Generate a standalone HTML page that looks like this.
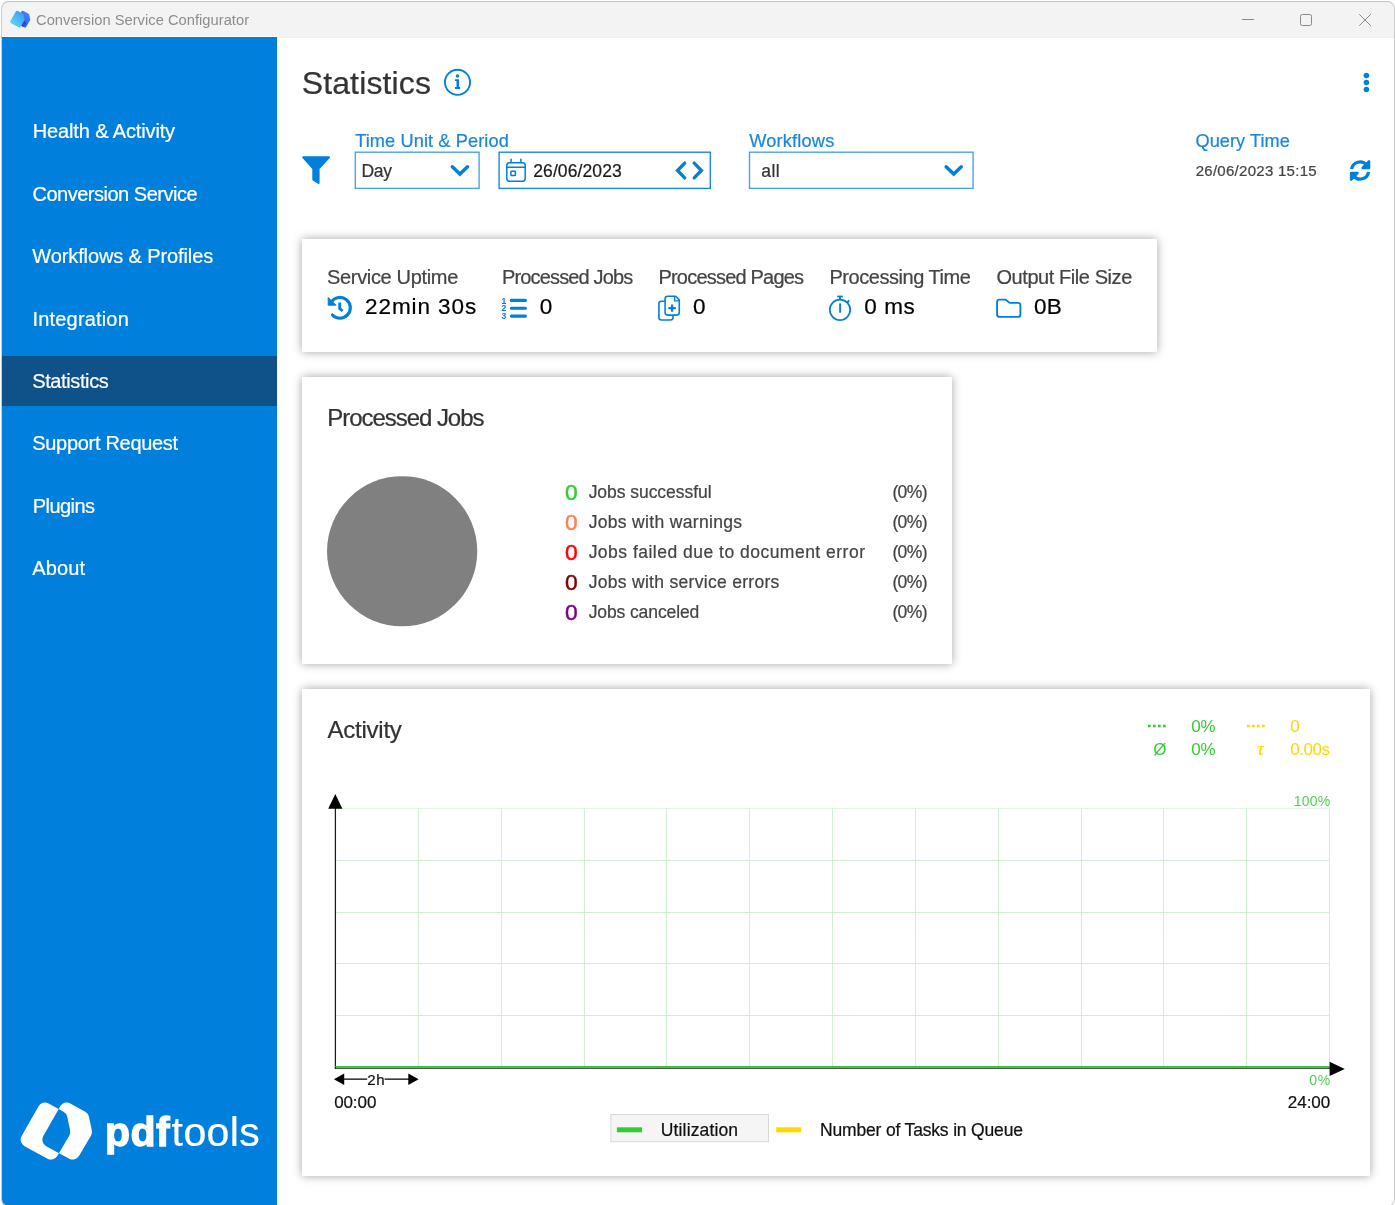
<!DOCTYPE html>
<html lang="en">
<head>
<meta charset="utf-8">
<title>Conversion Service Configurator</title>
<style>
*{box-sizing:border-box}
html,body{margin:0;padding:0;background:#fff}
body{width:1395px;height:1205px;overflow:hidden;position:relative;font-family:"Liberation Sans",sans-serif;color:#333}
/* every text run is absolutely placed: left = ink start, top derived from baseline */
.t{position:absolute;white-space:pre;line-height:1;margin:0;font-weight:400;display:block;text-decoration:none;-webkit-text-stroke:.22px currentColor}
b.t{-webkit-text-stroke:1.3px #fff}
.t.thin{-webkit-text-stroke:0}
i.t{font-style:normal;-webkit-text-stroke:.5px currentColor}
.grp{position:absolute;left:0;top:0;width:0;height:0}
#window{position:absolute;left:1px;top:1px;width:1394px;height:1206px;overflow:hidden;background:#fff;border-radius:8px}
#frame{position:absolute;left:1px;top:1px;width:1394px;height:1206px;border:1px solid #cdcdcd;border-top-color:#c3c3c3;border-radius:8px;pointer-events:none}
#page{position:absolute;left:-1px;top:-1px;width:1395px;height:1205px;will-change:transform}
#titlebar{position:absolute;left:0;top:0;width:1395px;height:38px;background:#f3f3f3;border-bottom:1px solid #f0f0f0}
#sidebar{position:absolute;left:2px;top:36px;width:275px;height:1171px;background:#0080dc;border-top:1px solid #fffdf8}
#sidebar .sel{position:absolute;left:0;top:319px;width:275px;height:50px;background:#0f5289}
.card{position:absolute;background:#fff;box-shadow:0 0 9px rgba(0,0,0,.36)}
svg{position:absolute;left:0;top:0;overflow:visible}
</style>
</head>
<body>
<div id="window"><div id="page">

<header id="titlebar">
<svg width="1395" height="40" viewBox="0 0 1395 40" aria-hidden="true"><defs><linearGradient id="ga" x1="0" y1="1" x2="1" y2="0"><stop offset="0" stop-color="#6adcf7"/><stop offset="1" stop-color="#2e97f2"/></linearGradient><linearGradient id="gb" x1="0" y1="1" x2="1" y2="0"><stop offset="0" stop-color="#1a55f0"/><stop offset="1" stop-color="#4c8af8"/></linearGradient></defs><path fill="url(#gb)" d="M21.39 11.58A1.61 1.61 0 0 1 23.56 10.96L28.51 13.69A1.61 1.61 0 0 1 29.31 14.76L30.23 19.15A1.61 1.61 0 0 1 30.05 20.30L26.29 26.70A1.61 1.61 0 0 1 24.14 27.30L16.64 23.25A1.61 1.61 0 0 1 16.01 21.05Z"/><path fill="#3d3fe0" d="M20.6 23.3 L23.4 18.6 L26.2 23.4 L24.2 26.4 Q23.4 27.2 22.4 26.6 L20.6 25.4Z"/><path fill="url(#ga)" d="M15.79 11.58A1.61 1.61 0 0 1 17.96 10.96L22.91 13.69A1.61 1.61 0 0 1 23.71 14.76L24.63 19.15A1.61 1.61 0 0 1 24.45 20.30L20.69 26.70A1.61 1.61 0 0 1 18.54 27.30L11.04 23.25A1.61 1.61 0 0 1 10.41 21.05Z"/><g fill="none" stroke="#8a8a8a" stroke-width="1"><path d="M1242 19.5H1254"/><rect x="1300.5" y="14.5" width="11" height="11" rx="1.8"/><path d="M1359.2 14.2L1370.8 25.8M1370.8 14.2L1359.2 25.8"/></g></svg>
<span class="t thin" style="left:36.05px;top:13.10px;font-size:14.7px;color:#8d8d8d;letter-spacing:0.024px">Conversion Service Configurator</span>
</header>

<nav class="grp" id="nav">
<div id="sidebar"><div class="sel"></div></div>
<a class="t" style="left:32.76px;top:121.30px;font-size:20px;color:#fff;letter-spacing:-0.133px">Health &amp; Activity</a>
<a class="t" style="left:32.48px;top:183.70px;font-size:20px;color:#fff;letter-spacing:-0.489px">Conversion Service</a>
<a class="t" style="left:32.31px;top:246.10px;font-size:20px;color:#fff;letter-spacing:-0.111px">Workflows &amp; Profiles</a>
<a class="t" style="left:32.55px;top:308.50px;font-size:20px;color:#fff;letter-spacing:0.173px">Integration</a>
<a class="t" style="left:32.19px;top:370.90px;font-size:20px;color:#fff;letter-spacing:-0.378px">Statistics</a>
<a class="t" style="left:32.19px;top:433.30px;font-size:20px;color:#fff;letter-spacing:-0.297px">Support Request</a>
<a class="t" style="left:32.76px;top:495.70px;font-size:20px;color:#fff;letter-spacing:-0.558px">Plugins</a>
<a class="t" style="left:32.36px;top:558.40px;font-size:20px;color:#fff;letter-spacing:0.080px">About</a>
<div class="grp" id="brand">
<svg class="logo-mark" width="1395" height="1205" viewBox="0 0 1395 1205" aria-hidden="true"><path fill="#fff" fill-rule="evenodd" d="M38.57 1106.23A7.40 7.40 0 0 1 48.57 1103.40L63.54 1111.63A7.40 7.40 0 0 1 67.21 1116.59L70.13 1130.40A7.40 7.40 0 0 1 69.27 1135.67L57.40 1155.87A7.40 7.40 0 0 1 47.51 1158.64L24.54 1146.24A7.40 7.40 0 0 1 21.62 1136.08ZM60.27 1106.23A7.40 7.40 0 0 1 70.27 1103.40L85.24 1111.63A7.40 7.40 0 0 1 88.91 1116.59L91.83 1130.40A7.40 7.40 0 0 1 90.97 1135.67L79.10 1155.87A7.40 7.40 0 0 1 69.21 1158.64L46.24 1146.24A7.40 7.40 0 0 1 43.32 1136.08Z"/></svg>
<b class="t" style="left:105.00px;top:1112.10px;font-size:41px;color:#fff;letter-spacing:0.486px;font-weight:700">pdf</b>
<span class="t" style="left:171.58px;top:1112.10px;font-size:41px;color:#fff;letter-spacing:0.423px">tools</span>
</div>
</nav>

<main class="grp" id="main">
<header class="grp" id="page-head">
<svg width="1395" height="120" viewBox="0 0 1395 120" aria-hidden="true"><circle cx="457.5" cy="82.3" r="12.55" fill="none" stroke="#0080dc" stroke-width="1.9"/><circle cx="457.5" cy="76.1" r="1.75" fill="#0080dc"/><path fill="#0080dc" d="M455 79.2h4.0v7.9h1.2v1.8h-5.3v-1.8h1.6v-6.1h-1.5z"/><g fill="#0080dc"><circle cx="1366.4" cy="75.5" r="2.8"/><circle cx="1366.4" cy="82.5" r="2.8"/><circle cx="1366.4" cy="89.45" r="2.8"/></g></svg>
<h1 class="t" style="left:301.65px;top:67.20px;font-size:32px;color:#333;letter-spacing:0.142px">Statistics</h1>
</header>

<section class="grp" id="filters">
<svg width="1395" height="220" viewBox="0 0 1395 220" aria-hidden="true"><path fill="#0080dc" stroke="#0080dc" stroke-width="2" stroke-linejoin="round" d="M303.2 157.3H329L318.6 168.6V182.9L313.3 179.6V168.6Z"/><rect x="355.3" y="152.2" width="123.8" height="36.2" fill="#fff" stroke="#4aa3ee" stroke-width="1.4"/><rect x="499.1" y="152.2" width="211.2" height="36.2" fill="#fff" stroke="#1c89de" stroke-width="1.4"/><rect x="749.5" y="152.2" width="223.6" height="36.2" fill="#fff" stroke="#4aa3ee" stroke-width="1.4"/><path d="M452.30 166.80L459.90 174.10L467.50 166.80" fill="none" stroke="#0080dc" stroke-width="3.4" stroke-linecap="round" stroke-linejoin="miter"/><path d="M946.10 166.80L953.70 174.10L961.30 166.80" fill="none" stroke="#0080dc" stroke-width="3.4" stroke-linecap="round" stroke-linejoin="miter"/><g fill="none" stroke="#0080dc" stroke-width="1.5"><rect x="506.8" y="162.8" width="18.4" height="18.4" rx="2.6"/><path d="M506.8 167.3H525.2M511.1 158.8V162.8M520.9 158.8V162.8"/><rect x="510.9" y="171.3" width="4.5" height="4.3" rx="0.6"/></g><path d="M684.7 163.1L677.5 170.5L684.7 177.9M694.2 163.1L701.4 170.5L694.2 177.9" fill="none" stroke="#0080dc" stroke-width="3.3" stroke-linecap="round" stroke-linejoin="miter"/><g id="rf"><path d="M1351.6 169.1A8.6 8.6 0 0 1 1366.6 164.9" fill="none" stroke="#0080dc" stroke-width="3.3"/><path d="M1369 161.5V167.9H1362.7Z" fill="#0080dc" stroke="#0080dc" stroke-width="2.6" stroke-linejoin="round"/></g><g transform="rotate(180 1360.1 170.5)"><path d="M1351.6 169.1A8.6 8.6 0 0 1 1366.6 164.9" fill="none" stroke="#0080dc" stroke-width="3.3"/><path d="M1369 161.5V167.9H1362.7Z" fill="#0080dc" stroke="#0080dc" stroke-width="2.6" stroke-linejoin="round"/></g></svg>
<span class="t" style="left:355.19px;top:132.00px;font-size:18.2px;color:#1a86dd;letter-spacing:0.096px">Time Unit &amp; Period</span>
<span class="t" style="left:749.22px;top:132.00px;font-size:18.2px;color:#1a86dd;letter-spacing:0.186px">Workflows</span>
<span class="t" style="left:1195.44px;top:132.00px;font-size:18.2px;color:#1a86dd;letter-spacing:0.041px">Query Time</span>
<span class="t" style="left:361.46px;top:163.00px;font-size:17.5px;color:#333;letter-spacing:-0.278px">Day</span>
<span class="t" style="left:533.22px;top:163.10px;font-size:17.5px;color:#1a1a1a;letter-spacing:0.106px">26/06/2023</span>
<span class="t" style="left:761.36px;top:163.00px;font-size:17.5px;color:#333;letter-spacing:0.349px">all</span>
<span class="t" style="left:1195.65px;top:163.00px;font-size:15.0px;color:#444;letter-spacing:0.280px">26/06/2023 15:15</span>
</section>

<section class="grp" id="summary">
<div class="card" style="left:302px;top:239px;width:855.2px;height:112.6px"></div>
<svg width="1395" height="360" viewBox="0 0 1395 360" aria-hidden="true"><path d="M331.6 301.6A10.4 10.4 0 1 1 332.4 315.0" fill="none" stroke="#0080dc" stroke-width="3.2" stroke-linecap="round"/><path fill="#0080dc" stroke="#0080dc" stroke-width="0.8" stroke-linejoin="round" d="M328.1 297.3V305.3H336.1Z"/><path d="M339.75 302.4V308.6L342.6 311.0" fill="none" stroke="#0080dc" stroke-width="2.9" stroke-linecap="butt" stroke-linejoin="miter"/><path d="M511.3 300.4H525.4M511.3 308.25H525.4M511.3 316.1H525.4" fill="none" stroke="#0080dc" stroke-width="3.1" stroke-linecap="round"/><g fill="#0080dc" font-family="'Liberation Sans',sans-serif" font-weight="700" font-size="8.6" text-anchor="middle"><text x="504" y="303.5">1</text><text x="504" y="311.3">2</text><text x="504" y="319.2">3</text></g><g fill="none" stroke="#0080dc" stroke-width="1.6" stroke-linejoin="round"><path d="M665 301.2H661.4A2.5 2.5 0 0 0 658.9 303.7V317.5A2.5 2.5 0 0 0 661.4 320H670.5A2.5 2.5 0 0 0 673 317.5V315.4"/><path d="M667.6 296.2H675.6L679.3 299.9V312.6A2.5 2.5 0 0 1 676.8 315.1H667.6A2.5 2.5 0 0 1 665.1 312.6V298.7A2.5 2.5 0 0 1 667.6 296.2Z"/><path d="M674.6 296.4V300.9H679.2" stroke-width="1.4"/></g><path d="M668.4 308.15H675.8M672.1 304.45V311.85" fill="none" stroke="#0080dc" stroke-width="2.3"/><g fill="none" stroke="#0080dc"><circle cx="840" cy="309.85" r="10.2" stroke-width="1.7"/><path d="M837.2 296.45H842.8" stroke-width="1.7"/><path d="M840 296.4V299.6" stroke-width="2"/><path d="M847.5 302.2L848.7 300.9" stroke-width="2" stroke-linecap="round"/><path d="M840.1 303.4V312.7" stroke-width="1.9"/></g><path d="M999.5 299.65H1005.2Q1006.1 299.65 1006.7 300.3L1008.6 302.2Q1009.3 302.9 1010.2 302.9H1018A2.4 2.4 0 0 1 1020.4 305.3V314.5A2.4 2.4 0 0 1 1018 316.9H999.5A2.4 2.4 0 0 1 997.1 314.5V302.05A2.4 2.4 0 0 1 999.5 299.65Z" fill="none" stroke="#0080dc" stroke-width="1.9" stroke-linejoin="round"/></svg>
<span class="t" style="left:327.04px;top:267.10px;font-size:20px;color:#444;letter-spacing:-0.336px">Service Uptime</span>
<span class="t" style="left:502.06px;top:267.10px;font-size:20px;color:#444;letter-spacing:-0.860px">Processed Jobs</span>
<span class="t" style="left:658.46px;top:267.10px;font-size:20px;color:#444;letter-spacing:-0.793px">Processed Pages</span>
<span class="t" style="left:829.46px;top:267.10px;font-size:20px;color:#444;letter-spacing:-0.458px">Processing Time</span>
<span class="t" style="left:996.45px;top:267.10px;font-size:20px;color:#444;letter-spacing:-0.431px">Output File Size</span>
<span class="t" style="left:365.07px;top:296.20px;font-size:22.5px;color:#000;letter-spacing:0.917px">22min 30s</span>
<span class="t" style="left:539.72px;top:296.20px;font-size:22.5px;color:#000">0</span>
<span class="t" style="left:692.92px;top:296.20px;font-size:22.5px;color:#000">0</span>
<span class="t" style="left:864.22px;top:296.20px;font-size:22.5px;color:#000;letter-spacing:0.609px">0 ms</span>
<span class="t" style="left:1034.12px;top:296.20px;font-size:22.5px;color:#000;letter-spacing:0.134px">0B</span>
</section>

<section class="grp" id="processed-jobs">
<div class="card" style="left:302px;top:376.7px;width:650.2px;height:287px"></div>
<svg width="1395" height="700" viewBox="0 0 1395 700" role="img" aria-label="Processed jobs pie chart"><circle cx="402.15" cy="551.25" r="75.1" fill="#808080"/></svg>
<h2 class="t" style="left:327.33px;top:405.60px;font-size:24px;color:#333;letter-spacing:-1.048px">Processed Jobs</h2>
<i class="t" style="left:564.91px;top:481.00px;font-size:22.8px;color:#32cd32">0</i>
<span class="t" style="left:588.63px;top:484.20px;font-size:17.5px;color:#444;letter-spacing:-0.042px">Jobs successful</span>
<span class="t" style="left:892.41px;top:484.20px;font-size:17.5px;color:#444;letter-spacing:-0.628px">(0%)</span>
<i class="t" style="left:564.91px;top:511.00px;font-size:22.8px;color:#ff7f50">0</i>
<span class="t" style="left:588.63px;top:514.05px;font-size:17.5px;color:#444;letter-spacing:0.332px">Jobs with warnings</span>
<span class="t" style="left:892.41px;top:514.05px;font-size:17.5px;color:#444;letter-spacing:-0.628px">(0%)</span>
<i class="t" style="left:564.91px;top:541.00px;font-size:22.8px;color:#ff0000">0</i>
<span class="t" style="left:588.63px;top:543.90px;font-size:17.5px;color:#444;letter-spacing:0.489px">Jobs failed due to document error</span>
<span class="t" style="left:892.41px;top:543.90px;font-size:17.5px;color:#444;letter-spacing:-0.628px">(0%)</span>
<i class="t" style="left:564.91px;top:571.00px;font-size:22.8px;color:#800000">0</i>
<span class="t" style="left:588.63px;top:573.75px;font-size:17.5px;color:#444;letter-spacing:0.300px">Jobs with service errors</span>
<span class="t" style="left:892.41px;top:573.75px;font-size:17.5px;color:#444;letter-spacing:-0.628px">(0%)</span>
<i class="t" style="left:564.91px;top:601.00px;font-size:22.8px;color:#800080">0</i>
<span class="t" style="left:588.63px;top:603.60px;font-size:17.5px;color:#444;letter-spacing:-0.099px">Jobs canceled</span>
<span class="t" style="left:892.41px;top:603.60px;font-size:17.5px;color:#444;letter-spacing:-0.628px">(0%)</span>
</section>

<section class="grp" id="activity">
<div class="card" style="left:302px;top:689px;width:1068.2px;height:487.2px"></div>
<svg width="1395" height="1205" viewBox="0 0 1395 1205" role="img" aria-label="Activity chart"><path d="M335.5 808.5H1329.6" fill="none" stroke="#e0f6e0" stroke-width="1"/><path d="M418.5 808.7V1067.3M501.5 808.7V1067.3M584.5 808.7V1067.3M666.5 808.7V1067.3M749.5 808.7V1067.3M832.5 808.7V1067.3M915.5 808.7V1067.3M998.5 808.7V1067.3M1081.5 808.7V1067.3M1163.5 808.7V1067.3M1246.5 808.7V1067.3M1329.5 808.7V1067.3M335.5 860.5H1329.6M335.5 912.5H1329.6M335.5 963.5H1329.6M335.5 1015.5H1329.6" fill="none" stroke="#cff1cf" stroke-width="1"/><path d="M335.4 808V1068.9M334.8 1068.2H1330" fill="none" stroke="#1c1c1c" stroke-width="1.25"/><path d="M335.4 1066.6H1329.6" fill="none" stroke="#32cd32" stroke-width="1.3"/><path fill="#000" d="M335.3 794.1L342.4 808.8H328.2ZM1344.8 1068.9L1329.6 1061.7V1076.1Z"/><path d="M343 1079.2H367.2M384.6 1079.2H409.5" fill="none" stroke="#000" stroke-width="1.3"/><path fill="#000" d="M333.9 1079.2L344.2 1073.5V1084.9ZM418.6 1079.2L408.3 1073.5V1084.9Z"/><path d="M1148 726H1166" fill="none" stroke="#32cd32" stroke-width="2.6" stroke-dasharray="2.7 2.3"/><path d="M1247 726H1265" fill="none" stroke="#ffd700" stroke-width="2.6" stroke-dasharray="2.7 2.3"/><rect x="610.9" y="1114.5" width="157.6" height="27.2" fill="#f5f5f5" stroke="#d9d9d9" stroke-width="1"/><path d="M616.9 1129.8H642" stroke="#32cd32" stroke-width="5" fill="none"/><path d="M776.2 1129.8H801.2" stroke="#ffd700" stroke-width="5" fill="none"/></svg>
<h2 class="t" style="left:327.55px;top:718.20px;font-size:24px;color:#333;letter-spacing:-0.246px">Activity</h2>
<span class="t thin" style="left:1191.34px;top:718.40px;font-size:17.0px;color:#32cd32;letter-spacing:-0.308px">0%</span>
<span class="t thin" style="left:1191.34px;top:741.20px;font-size:17.0px;color:#32cd32;letter-spacing:-0.308px">0%</span>
<span class="t thin" style="left:1153.31px;top:741.20px;font-size:17.0px;color:#32cd32">Ø</span>
<span class="t thin" style="left:1290.24px;top:718.40px;font-size:17.0px;color:#ffd700">0</span>
<span class="t thin" style="left:1290.24px;top:741.20px;font-size:17.0px;color:#ffd700;letter-spacing:-0.479px">0.00s</span>
<span class="t" style="left:1256.98px;top:739.40px;font-size:19.0px;color:#ffd700;font-style:italic;font-family:'Liberation Serif',serif">τ</span>
<span class="t thin" style="left:1293.73px;top:794.30px;font-size:14.0px;color:#4fd34f;letter-spacing:0.218px">100%</span>
<span class="t thin" style="left:1309.25px;top:1073.00px;font-size:14.0px;color:#4fd34f;letter-spacing:0.612px">0%</span>
<span class="t" style="left:367.15px;top:1072.20px;font-size:15.0px;color:#111;letter-spacing:0.841px">2h</span>
<span class="t" style="left:334.14px;top:1094.20px;font-size:17.0px;color:#111;letter-spacing:-0.080px">00:00</span>
<span class="t" style="left:1287.75px;top:1094.00px;font-size:17.0px;color:#111;letter-spacing:-0.007px">24:00</span>
<span class="t" style="left:660.85px;top:1121.50px;font-size:17.5px;color:#111;letter-spacing:0.131px">Utilization</span>
<span class="t" style="left:820.06px;top:1121.50px;font-size:17.5px;color:#111;letter-spacing:-0.172px">Number of Tasks in Queue</span>
</section>
</main>

</div></div>
<div id="frame"></div>
</body>
</html>
